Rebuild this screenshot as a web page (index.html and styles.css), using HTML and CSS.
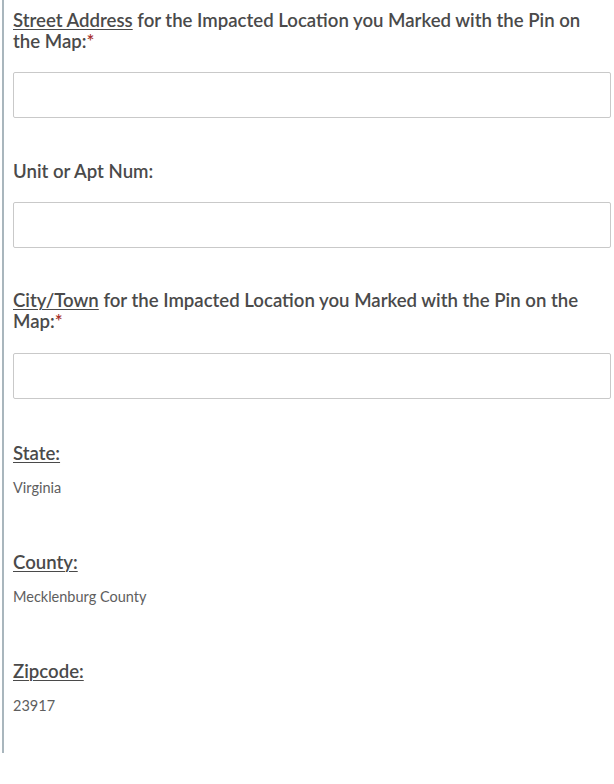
FILE: index.html
```html
<!DOCTYPE html>
<html lang="en">
<head>
<meta charset="utf-8">
<title>Location form</title>
<link rel="stylesheet" href="styles.css">
</head>
<body>
<div class="form">
  <div class="field">
    <label class="label"><u>Street Address</u> for the Impacted Location you Marked with the Pin on the Map:<span class="req">*</span></label>
    <input class="input" type="text">
  </div>
  <div class="field field-unit">
    <label class="label">Unit or Apt Num:</label>
    <input class="input" type="text">
  </div>
  <div class="field field-city">
    <label class="label"><u>City/Town</u> for the Impacted Location you Marked with the Pin on the Map:<span class="req">*</span></label>
    <input class="input" type="text">
  </div>
  <div class="field">
    <div class="label"><u>State:</u></div>
    <div class="value">Virginia</div>
  </div>
  <div class="field field-ro">
    <div class="label"><u>County:</u></div>
    <div class="value">Mecklenburg County</div>
  </div>
  <div class="field field-ro">
    <div class="label"><u>Zipcode:</u></div>
    <div class="value">23917</div>
  </div>
</div>
</body>
</html>
```
FILE: styles.css
```css
html, body {
  margin: 0;
  padding: 0;
  background: #ffffff;
}
body {
  font-family: "Lato", "Open Sans", sans-serif;
  color: #4a4a4a;
}
.form {
  margin-left: 2px;
  border-left: 2px solid #a9b6bd;
  padding: 10px 3px 38px 9px;
  display: flex;
  flex-direction: column;
}
.field {
  display: flex;
  flex-direction: column;
  margin-bottom: 42px;
}
.field-unit {
  margin-top: 1px;
}
.field-city {
  margin-bottom: 44px;
}
.field-city .label {
  margin-bottom: 21px;
}
.field:last-child {
  margin-bottom: 0;
}
.field-ro {
  margin-top: 13px;
}
.label {
  font-size: 18.6px;
  line-height: 21px;
  font-weight: 600;
  color: #4a4a4a;
  margin-bottom: 20px;
}
.label u {
  text-decoration-thickness: 1px;
  text-underline-offset: 2px;
}
.req {
  color: #a8322d;
}
.input {
  display: block;
  box-sizing: border-box;
  width: 100%;
  height: 46px;
  margin: 0;
  border: 1px solid #c9c9c9;
  border-radius: 2px;
  background: #fff;
  font: inherit;
}
.value {
  font-size: 14.5px;
  line-height: 18px;
  color: #5e5e5e;
  margin-top: -5px;
}
```
